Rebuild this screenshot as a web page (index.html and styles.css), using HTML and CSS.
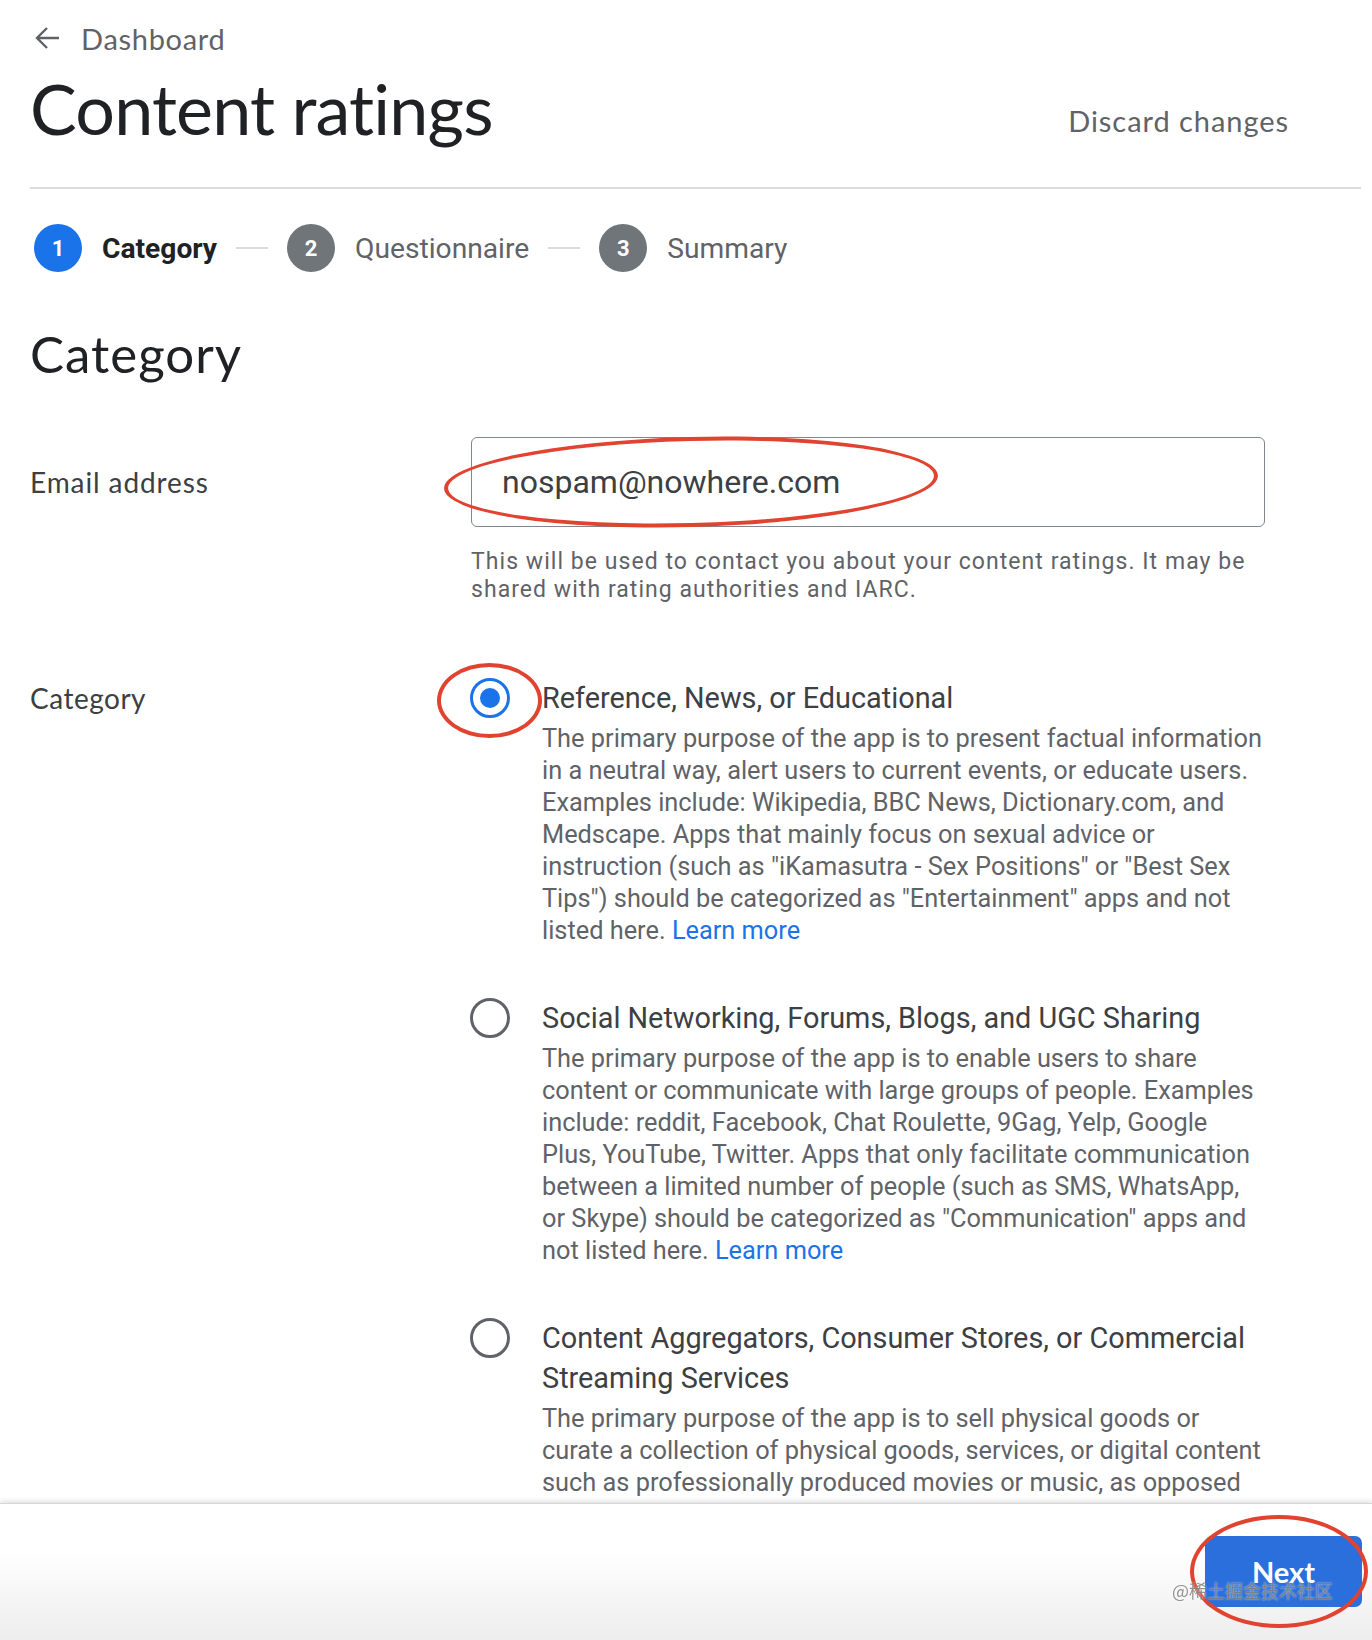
FILE: index.html
```html
<!DOCTYPE html>
<html lang="en">
<head>
    <meta charset="UTF-8">
    <meta name="viewport" content="width=device-width, initial-scale=1.0">
    <title>Content ratings</title>
    <link rel="stylesheet" href="styles.css">
</head>
<body>
    <div class="page">
        <a class="back-link" href="#">
            <svg class="back-icon" viewBox="0 0 26 26"><path d="M25 13H3M13 3L3 13l10 10"/></svg>
            <span>Dashboard</span>
        </a>
        <div class="title-row">
            <h1>Content ratings</h1>
            <button class="discard-btn" type="button">Discard changes</button>
        </div>
        <div class="divider"></div>

        <div class="stepper">
            <div class="step active"><span class="step-num">1</span><span class="step-label">Category</span></div>
            <span class="step-line"></span>
            <div class="step"><span class="step-num">2</span><span class="step-label">Questionnaire</span></div>
            <span class="step-line"></span>
            <div class="step"><span class="step-num">3</span><span class="step-label">Summary</span></div>
        </div>

        <h2 class="section-title">Category</h2>

        <div class="form-row email-row">
            <label class="row-label" for="email">Email address</label>
            <div class="row-field">
                <div class="input-wrap">
                    <input id="email" type="email" value="nospam@nowhere.com">
                    <span class="mark mark-input"></span>
                </div>
                <p class="helper">This will be used to contact you about your content ratings. It may be shared with rating authorities and IARC.</p>
            </div>
        </div>

        <div class="form-row category-row">
            <span class="row-label">Category</span>
            <div class="row-field options">
                <div class="option">
                    <div class="radio-col">
                        <span class="radio checked"></span>
                        <span class="mark mark-radio"></span>
                    </div>
                    <div class="option-body">
                        <div class="option-title">Reference, News, or Educational</div>
                        <p class="option-desc">The primary purpose of the app is to present factual information in a neutral way, alert users to current events, or educate users. Examples include: Wikipedia, BBC News, Dictionary.com, and Medscape. Apps that mainly focus on sexual advice or instruction (such as "iKamasutra - Sex Positions" or "Best Sex Tips") should be categorized as "Entertainment" apps and not listed here. <a href="#">Learn more</a></p>
                    </div>
                </div>
                <div class="option">
                    <div class="radio-col">
                        <span class="radio"></span>
                    </div>
                    <div class="option-body">
                        <div class="option-title">Social Networking, Forums, Blogs, and UGC Sharing</div>
                        <p class="option-desc">The primary purpose of the app is to enable users to share content or communicate with large groups of people. Examples include: reddit, Facebook, Chat Roulette, 9Gag, Yelp, Google Plus, YouTube, Twitter. Apps that only facilitate communication between a limited number of people (such as SMS, WhatsApp, or Skype) should be categorized as "Communication" apps and not listed here. <a href="#">Learn more</a></p>
                    </div>
                </div>
                <div class="option">
                    <div class="radio-col">
                        <span class="radio"></span>
                    </div>
                    <div class="option-body">
                        <div class="option-title">Content Aggregators, Consumer Stores, or Commercial Streaming Services</div>
                        <p class="option-desc">The primary purpose of the app is to sell physical goods or curate a collection of physical goods, services, or digital content such as professionally produced movies or music, as opposed to user-generated content. Examples include: Amazon, Netflix, eBay, Hulu, Spotify. <a href="#">Learn more</a></p>
                    </div>
                </div>
            </div>
        </div>
    </div>

    <div class="action-bar">
        <div class="next-wrap">
            <button class="next-btn" type="button">Next</button>
            <span class="mark mark-next"></span>
        </div>
        <span class="watermark">@稀土掘金技术社区</span>
    </div>
</body>
</html>
```

FILE: styles.css
```css
body {
    margin: 0;
    font-family: Roboto, "Noto Sans", sans-serif;
    background: #fff;
    color: #3c4043;
    overflow: hidden;
}
.page {
    padding: 18px 11px 0 30px;
}
.back-link {
    display: inline-flex;
    align-items: center;
    gap: 21px;
    height: 40px;
    margin-left: 4px;
    color: #5f6368;
    text-decoration: none;
    font-family: Lato, sans-serif;
    font-size: 29px;
    letter-spacing: 0.7px;
}
.back-icon {
    width: 26px;
    height: 26px;
    fill: none;
    stroke: #5f6368;
    stroke-width: 2.4;
}
.title-row {
    display: flex;
    justify-content: space-between;
    align-items: center;
    height: 129px;
    padding-right: 72px;
}
h1 {
    align-self: flex-start;
    margin: 10px 0 0;
    font-family: Lato, sans-serif;
    font-weight: 400;
    font-size: 70px;
    line-height: 80px;
    letter-spacing: -0.8px;
    color: #202124;
}
.discard-btn {
    margin-top: -4px;
    border: none;
    background: none;
    padding: 0;
    font-family: Lato, sans-serif;
    font-size: 29px;
    letter-spacing: 0.95px;
    color: #5f6368;
    cursor: pointer;
}
.divider {
    height: 2px;
    background: #dadce0;
}

.stepper {
    display: flex;
    align-items: center;
    gap: 19px;
    height: 48px;
    margin: 35px 0 0 4px;
}
.step {
    display: flex;
    align-items: center;
    gap: 20px;
}
.step-num {
    display: flex;
    align-items: center;
    justify-content: center;
    width: 48px;
    height: 48px;
    border-radius: 50%;
    background: #70757a;
    color: #fff;
    font-size: 22px;
    font-weight: 700;
}
.step.active .step-num {
    background: #1a73e8;
}
.step-label {
    font-size: 28.2px;
    color: #5f6368;
}
.step.active .step-label {
    font-weight: 700;
    color: #202124;
}
.step-line {
    width: 32px;
    height: 2px;
    background: #dadce0;
}

.section-title {
    margin: 52px 0 0;
    font-family: Lato, sans-serif;
    font-weight: 400;
    font-size: 51px;
    line-height: 60px;
    letter-spacing: 1px;
    color: #202124;
}

.form-row {
    display: flex;
}
.email-row {
    margin-top: 53px;
}
.category-row {
    margin-top: 74px;
}
.row-label {
    width: 441px;
    flex-shrink: 0;
    font-family: Lato, sans-serif;
    font-size: 28px;
    letter-spacing: 0.9px;
    color: #3c4043;
}
.category-row .row-label {
    letter-spacing: 0.5px;
    line-height: 40px;
}
.email-row .row-label {
    line-height: 90px;
}
.row-field {
    width: 794px;
}
.input-wrap {
    position: relative;
}
.input-wrap input {
    display: block;
    width: 100%;
    height: 90px;
    box-sizing: border-box;
    padding: 0 30px;
    border: 1.5px solid #80868b;
    border-radius: 6px;
    font-family: Roboto, sans-serif;
    font-size: 32px;
    color: #3c4043;
    outline: none;
}
.helper {
    margin: 21px 0 0;
    font-size: 23px;
    line-height: 28px;
    letter-spacing: 1.05px;
    color: #5f6368;
}

.option {
    display: flex;
    margin-bottom: 52px;
}
.radio-col {
    position: relative;
    width: 71px;
    flex-shrink: 0;
}
.radio {
    display: flex;
    align-items: center;
    justify-content: center;
    width: 40px;
    height: 40px;
    margin-left: -1px;
    box-sizing: border-box;
    border: 3.5px solid #5f6368;
    border-radius: 50%;
}
.radio.checked {
    border-color: #1a73e8;
}
.radio.checked::after {
    content: "";
    width: 20px;
    height: 20px;
    border-radius: 50%;
    background: #1a73e8;
}
.option-body {
    width: 722px;
}
.option-title {
    font-size: 28.85px;
    line-height: 40px;
    color: #3c4043;
}
.option-desc {
    margin: 4px 0 0;
    font-size: 25.35px;
    line-height: 32px;
    color: #5f6368;
}
.option-desc a {
    color: #1a73e8;
    text-decoration: none;
}

.action-bar {
    position: fixed;
    left: 0;
    right: 0;
    bottom: 0;
    height: 137px;
    display: flex;
    justify-content: flex-end;
    align-items: flex-start;
    padding: 32px 10px 0 0;
    box-sizing: border-box;
    border-top: 1px solid #d6d6d6;
    background: linear-gradient(#fff 35%, #ededed);
    box-shadow: 0 -2px 5px rgba(0, 0, 0, 0.12);
}
.next-wrap {
    position: relative;
}
.next-btn {
    display: block;
    width: 157px;
    height: 71px;
    border: none;
    border-radius: 7px;
    background: #2b6fdc;
    color: #fff;
    font-family: Lato, sans-serif;
    font-size: 29px;
    font-weight: 700;
    cursor: pointer;
}
.watermark {
    position: absolute;
    right: 39px;
    top: 73px;
    font-family: "Noto Sans CJK SC", sans-serif;
    font-size: 18px;
    color: rgba(110, 110, 110, 0.75);
    text-shadow: 0 0 2px rgba(255, 255, 255, 0.8);
}

/* red hand-drawn annotations */
.mark {
    position: absolute;
    border: 4px solid #e0432f;
    border-radius: 50%;
    box-sizing: border-box;
    pointer-events: none;
}
.mark-input {
    left: -27px;
    top: 0;
    width: 494px;
    height: 90px;
    transform: rotate(-1.5deg);
}
.mark-radio {
    left: -34px;
    top: -15px;
    width: 105px;
    height: 75px;
}
.mark-next {
    left: -15px;
    top: -21px;
    width: 178px;
    height: 113px;
}
```
